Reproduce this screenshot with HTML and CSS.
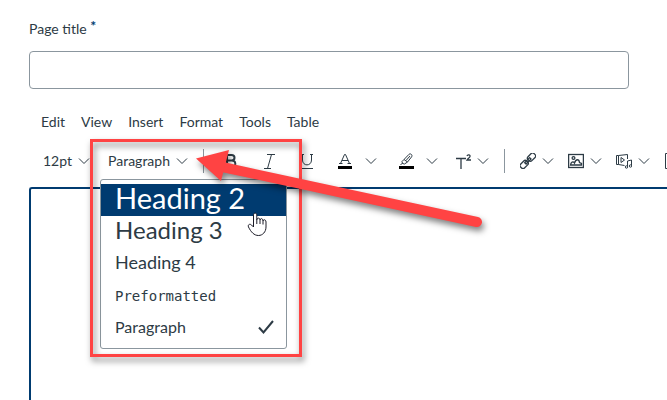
FILE: index.html
```
<!doctype html>
<html lang="en">
<head>
    <meta charset="UTF-8">
    <title>Edit page</title>
    <link rel="stylesheet" href="styles.css">
</head>
<body>
    <svg class="defs" aria-hidden="true">
        <symbol id="chevron" viewBox="0 0 12 12"><path d="M1 3.5 L6 8.5 L11 3.5"/></symbol>
    </svg>
    <form class="page">
        <div class="field">
            <label for="title">Page title <span class="required">*</span></label>
            <input type="text" id="title" required>
        </div>

        <nav class="menubar">
            <button type="button">Edit</button>
            <button type="button">View</button>
            <button type="button">Insert</button>
            <button type="button">Format</button>
            <button type="button">Tools</button>
            <button type="button">Table</button>
        </nav>

        <div class="toolbar" role="toolbar" aria-label="Formatting">
            <button type="button" class="drop size">12pt <svg class="chevron"><use href="#chevron"/></svg></button>
            <div class="block-format">
                <button type="button" class="drop" aria-expanded="true">Paragraph <svg class="chevron"><use href="#chevron"/></svg></button>
                <div class="menu">
                    <button type="button" class="h2 active">Heading 2</button>
                    <button type="button" class="h3">Heading 3</button>
                    <button type="button" class="h4">Heading 4</button>
                    <button type="button" class="pre">Preformatted</button>
                    <button type="button">Paragraph
                        <svg class="check" viewBox="0 0 16 16"><path d="M1 8.5 L5.5 13.5 L15 2"/></svg>
                    </button>
                </div>
            </div>

            <span class="sep"></span>

            <button type="button" class="tool" aria-label="Bold">
                <svg class="icon bold" viewBox="0 0 16 16"><path d="M4 1.5 V14.5 M2 2 H8.5 C12.5 2 12.5 7.5 8.5 7.5 H4 M8.5 7.5 C13.5 7.5 13.5 14 9 14 H2"/></svg>
            </button>
            <button type="button" class="tool" aria-label="Italic">
                <svg class="icon" viewBox="0 0 16 16"><path d="M6 1.5 H14 M3 15.5 H10 M10.5 1.5 L6.5 15.5"/></svg>
            </button>
            <button type="button" class="tool" aria-label="Underline">
                <svg class="icon" viewBox="0 0 16 16"><path d="M3.5 1 V7 C3.5 13.5 12.5 13.5 12.5 7 V1 M1 1.5 H5 M11 1.5 H14 M2 15.5 H14"/></svg>
            </button>
            <div class="split">
                <button type="button" class="tool" aria-label="Text color">
                    <svg class="icon" viewBox="0 0 16 16"><path d="M3.5 10.5 L7.5 1.5 H8.5 L12.5 10.5 M5 7.5 H11 M2 10.5 H5.5 M10.5 10.5 H14"/><rect class="swatch" x="1" y="13" width="14" height="3"/></svg>
                </button>
                <button type="button" class="more" aria-label="Text colors"><svg class="chevron"><use href="#chevron"/></svg></button>
            </div>
            <div class="split">
                <button type="button" class="tool" aria-label="Background color">
                    <svg class="icon" viewBox="0 0 16 16"><path d="M6 6.5 L11 1.3 C12.5 0 15 2 13.5 4 L9.5 9 Z M6 6.5 L4 8.5 L4.5 10.5 L6.5 11 L9.5 9 M4.5 10.5 L2.5 11.5 M8 7.5 L12 3"/><rect class="swatch" x="1" y="13" width="15" height="3"/></svg>
                </button>
                <button type="button" class="more" aria-label="Background colors"><svg class="chevron"><use href="#chevron"/></svg></button>
            </div>
            <button type="button" class="drop" aria-label="Superscript">
                <svg class="icon thick" viewBox="0 0 16 16"><path d="M1 5.5 H11 M6 5.5 V16 M12 3 C12.5 1.2 15.5 1.5 15 3.5 C14.8 4.7 13 5.5 12 7 H16"/></svg>
                <svg class="chevron"><use href="#chevron"/></svg>
            </button>

            <span class="sep"></span>

            <button type="button" class="drop" aria-label="Links">
                <svg class="icon" viewBox="0 0 16 16"><g class="thick" transform="rotate(-45 8 8)"><rect x="-1.5" y="5" width="8.5" height="5.5" rx="2"/><rect x="9" y="5" width="8.5" height="5.5" rx="2"/><rect x="4.5" y="6.8" width="7" height="2"/></g></svg>
                <svg class="chevron"><use href="#chevron"/></svg>
            </button>
            <button type="button" class="drop" aria-label="Images">
                <svg class="icon thick" viewBox="0 0 16 16"><rect x=".6" y="1.5" width="14.8" height="13"/><circle cx="5.5" cy="5" r="1.4"/><path d="M2.5 12 C3 9 5 8 6.5 10 C8 5.5 11 6 11.5 9.5 L13.5 10.5 V12 Z"/></svg>
                <svg class="chevron"><use href="#chevron"/></svg>
            </button>
            <button type="button" class="drop" aria-label="Media">
                <svg class="icon" viewBox="0 0 16 16"><path d="M8.5 12.5 L2.5 11.5 H.5 V2.5 H2.5 L11.5 1.5 V6 M2.5 2.5 V11.5 M5 4.5 L8.5 7 L5 9.5 Z M11.5 13.5 V8 L15.5 7 V12.5"/><circle cx="10.5" cy="14" r="1.2"/><circle cx="14.5" cy="13" r="1.2"/></svg>
                <svg class="chevron"><use href="#chevron"/></svg>
            </button>
            <button type="button" class="drop" aria-label="Documents">
                <svg class="icon" viewBox="0 0 16 16"><path d="M1.5 .5 H10 L14 5 V15.5 H1.5 Z"/></svg>
                <svg class="chevron"><use href="#chevron"/></svg>
            </button>
        </div>

        <div class="content" contenteditable="true" aria-label="Page content"></div>
    </form>

    <!-- callout box, arrow and pointer -->
    <svg class="callout" viewBox="0 0 420 240" aria-hidden="true">
        <g class="shadow">
            <rect class="frame" x="11.5" y="10.5" width="209" height="215"/>
        </g>
        <g class="shadow">
            <path class="shaft" d="M140 36.5 L397 92"/>
            <path class="head" d="M116 28.5 L149 20 L141 51 Z"/>
        </g>
        <path class="hand" d="M173.5 97 V85 C173.5 82.5 176.8 82.5 176.8 85 V90 C177 87.5 180 87.5 180 90 C180.3 88 183 88 183 91 C183.5 89 186 89.5 186 92 V97 C186 102 182.5 105.5 178.5 105.5 C174 105.5 171 102 168.5 97 C167.5 94.5 170 93.5 171.5 95 Z M176.8 90 V94 M180 90 V94 M183 91 V94.5"/>
    </svg>
</body>
</html>
```

FILE: styles.css
```
*{
    box-sizing: border-box;
}
body{
    margin: 0;
    background: #fff;
    color: #2d3b45;
    font: 14px/20px Lato, "Liberation Sans", sans-serif;
}
button{
    margin: 0;
    padding: 0;
    border: 0;
    background: none;
    color: inherit;
    font: inherit;
    cursor: pointer;
}
svg{
    fill: none;
    stroke: #2d3b45;
    flex: none;
}
.defs{
    display: none;
}
.page{
    display: flex;
    flex-direction: column;
    min-height: 100vh;
    padding: 19px 0 0 29px;
    overflow-x: clip;
}

/* title */
.field{
    display: flex;
    flex-direction: column;
    gap: 12px;
    margin-right: 38px;
}
.required{
    color: #003b70;
    font-weight: bold;
    line-height: 0;
    vertical-align: 3px;
}
.field input{
    height: 38px;
    padding: 0 12px;
    border: 1px solid #8b969e;
    border-radius: 4px;
    color: inherit;
    font: inherit;
}

/* editor */
.menubar{
    display: flex;
    gap: 16px;
    padding: 23px 12px 0;
}
.toolbar{
    display: flex;
    align-items: center;
    height: 55px;
    padding: 3px 0 0 7px;
}
.drop{
    display: flex;
    flex: none;
    align-items: center;
    gap: 6px;
    height: 32px;
    padding: 0 7px;
}
.size{
    margin-right: 4px;
}
.block-format{
    position: relative;
    flex: none;
}
.sep{
    flex: none;
    width: 1px;
    height: 24px;
    margin: 0 8px;
    background: #8b969e;
}
.tool{
    display: flex;
    flex: none;
    align-items: center;
    justify-content: center;
    width: 38px;
    height: 32px;
}
.split{
    display: flex;
    flex: none;
    align-items: center;
    margin-right: 9px;
}
.more{
    display: flex;
    justify-content: center;
    width: 14px;
}
.icon{
    width: 16px;
    height: 16px;
}
.chevron{
    width: 12px;
    height: 12px;
}
.bold{
    stroke-width: 2;
}
.thick{
    stroke-width: 1.3;
}
.swatch{
    fill: #000;
    stroke: none;
}
.content{
    flex: 1;
    border: 2px solid #003b70;
    border-width: 2px 0 0 2px;
    border-radius: 3px 0 0 0;
    outline: none;
}

/* block format menu */
.menu{
    position: absolute;
    z-index: 1;
    top: 34px;
    left: -1px;
    width: 187px;
    padding: 4px 0;
    border: 1px solid #8b969e;
    border-radius: 3px;
    background: #fff;
}
.menu button{
    display: flex;
    align-items: center;
    justify-content: space-between;
    width: 100%;
    height: 32px;
    padding: 0 12px 2px 14px;
    font-size: 16px;
    text-align: left;
}
.menu .h2{
    padding-bottom: 4px;
    font-size: 29px;
}
.menu .h3{
    padding-bottom: 4px;
    font-size: 24px;
}
.menu .h4{
    padding-bottom: 4px;
    font-size: 18px;
}
.menu .pre{
    padding-bottom: 0;
    font-family: "DejaVu Sans Mono", monospace;
    font-size: 14px;
}
.menu .active{
    background: #003b70;
    color: #fff;
}
.check{
    width: 16px;
    height: 16px;
    stroke-width: 2;
}

/* callout */
.callout{
    position: absolute;
    z-index: 2;
    top: 130px;
    left: 80px;
    width: 420px;
    height: 240px;
    pointer-events: none;
}
.shadow{
    filter: drop-shadow(2px 4px 3px rgba(0,0,0,.5));
}
.frame{
    stroke: #ff4343;
    stroke-width: 3;
}
.shaft{
    stroke: #ff4343;
    stroke-width: 10;
    stroke-linecap: round;
}
.head{
    fill: #ff4343;
    stroke: none;
}
.hand{
    fill: #fff;
    stroke: #1c1c28;
}
```
